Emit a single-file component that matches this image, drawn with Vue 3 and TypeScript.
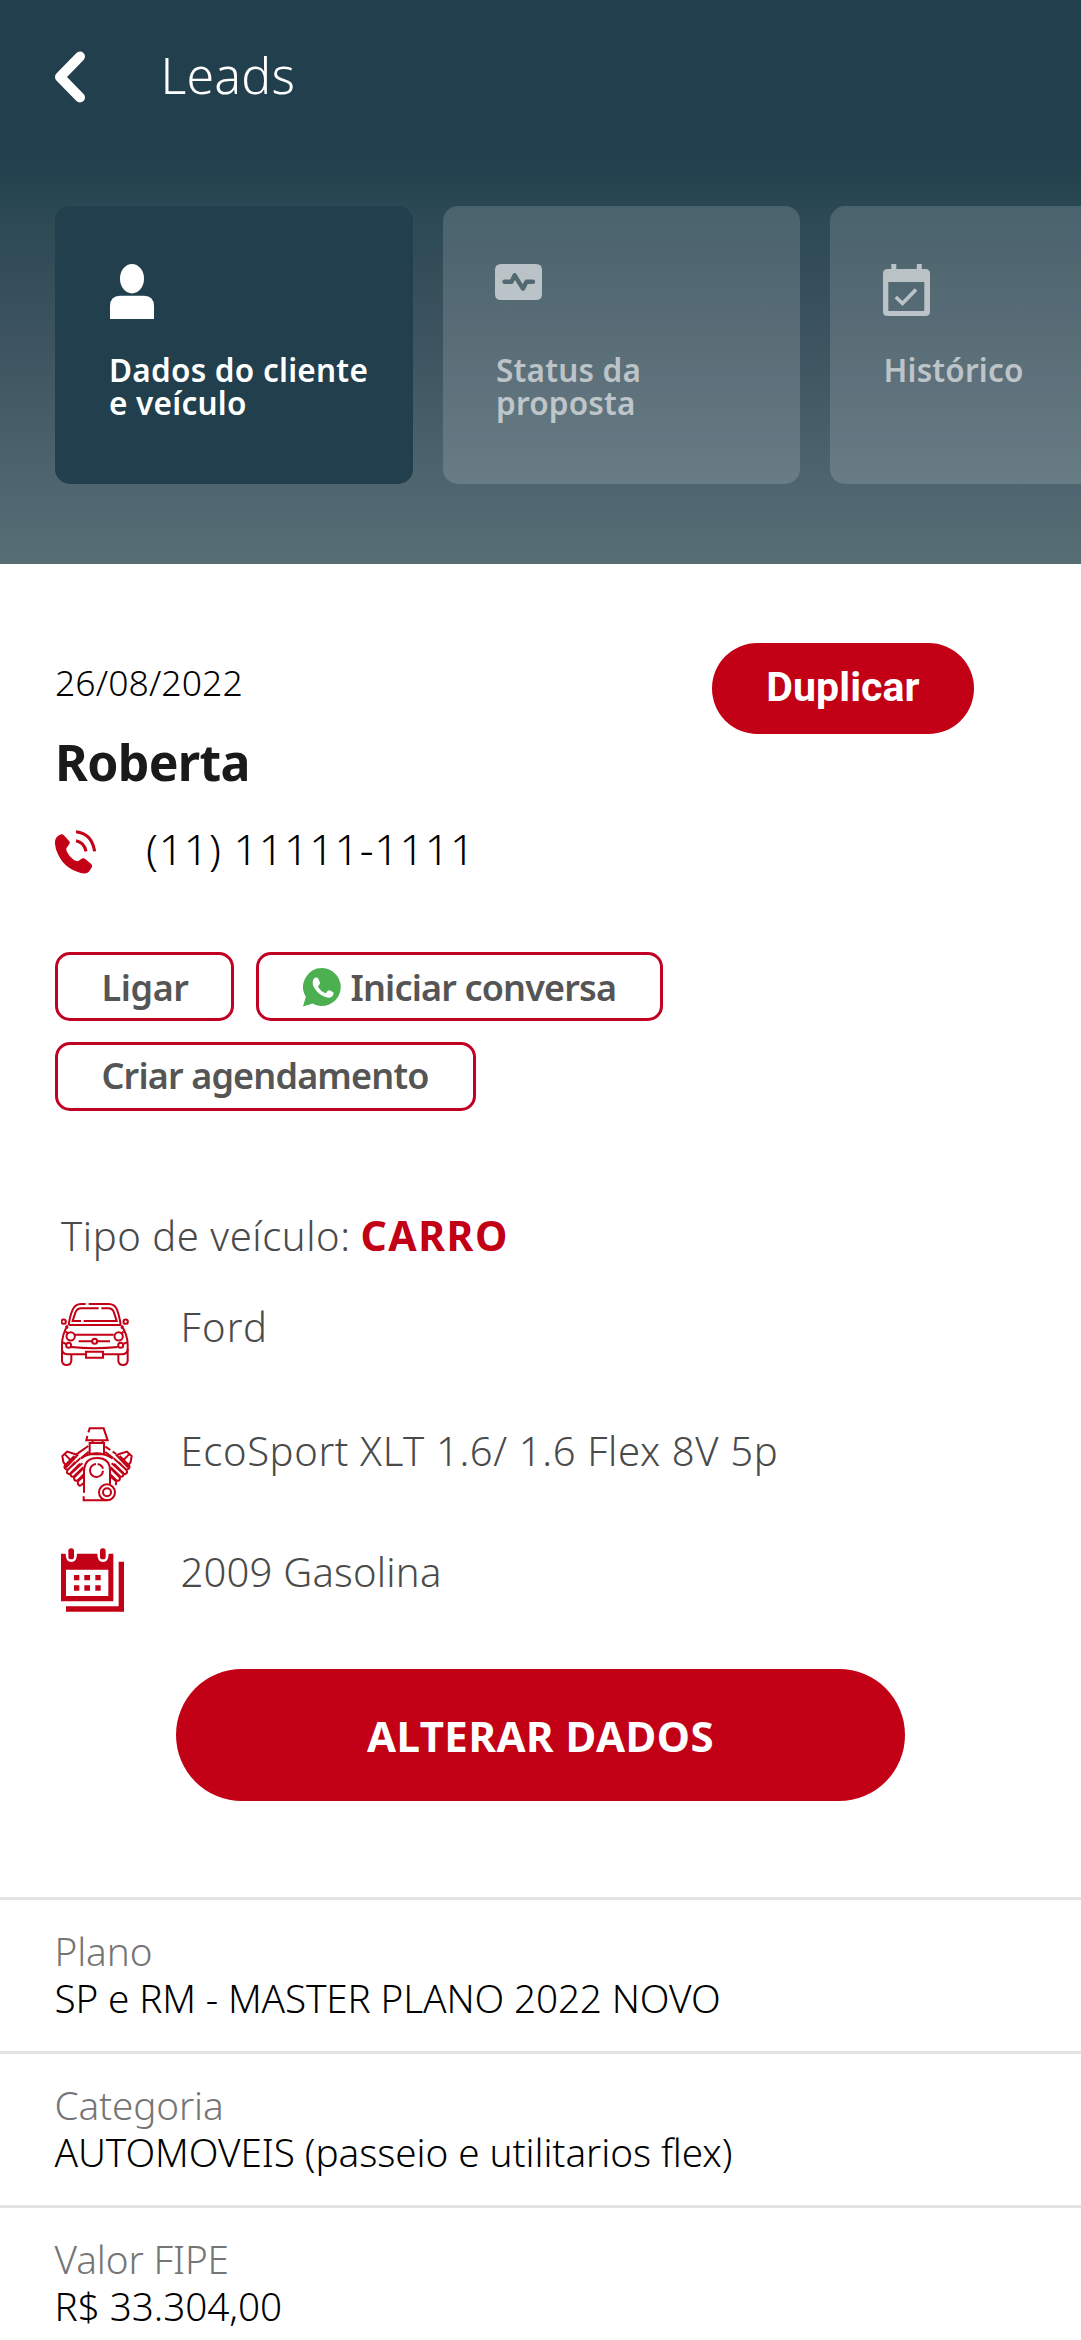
<script setup lang="ts">
interface Detail {
  label: string
  value: string
  labelSpacing: number
  valueSpacing: number
}

const details: Detail[] = [
  { label: 'Plano', value: 'SP e RM - MASTER PLANO 2022 NOVO', labelSpacing: -0.1, valueSpacing: -0.14 },
  { label: 'Categoria', value: 'AUTOMOVEIS (passeio e utilitarios flex)', labelSpacing: -0.15, valueSpacing: -0.08 },
  { label: 'Valor FIPE', value: 'R$ 33.304,00', labelSpacing: -0.1, valueSpacing: -0.05 },
]
</script>

<template>
  <div class="screen">
    <header class="header">
      <div class="bar">
        <svg class="back" width="30" height="52" viewBox="55 51 30 52">
          <path d="M80 56.5 60 77l20 20.5" fill="none" stroke="#fff" stroke-width="10" stroke-linecap="round" stroke-linejoin="round" />
        </svg>
        <h1 class="title">Leads</h1>
      </div>
      <nav class="tabs">
        <div class="tab active">
          <div class="tab-icon">
            <svg width="44" height="55" viewBox="110 264 44 55" fill="#fff">
              <ellipse cx="132" cy="278.7" rx="12" ry="14.7" />
              <path d="M110 319v-13q0-10 10-10.300h24q10 .3 10 10.300v13z" />
            </svg>
          </div>
          <div class="tab-text dados">Dados do cliente<br />e veículo</div>
        </div>
        <div class="tab">
          <div class="tab-icon dim">
            <svg width="47" height="36" viewBox="495 264 47 36">
              <path fill-rule="evenodd" fill="#fff" d="M501 264h35q6 0 6 6v24q0 6-6 6h-35q-6 0-6-6v-24q0-6 6-6z" mask="url(#pulse)" />
              <mask id="pulse" maskUnits="userSpaceOnUse" x="495" y="264" width="47" height="36">
                <rect x="495" y="264" width="47" height="36" fill="#fff" />
                <path d="M504.500 281.800h7l3.200-6.500 8.200 13.400 3.600-6.900h6.500" fill="none" stroke="#000" stroke-width="4.400" stroke-linecap="round" stroke-linejoin="round" />
              </mask>
            </svg>
          </div>
          <div class="tab-text status">Status da<br />proposta</div>
        </div>
        <div class="tab">
          <div class="tab-icon dim">
            <svg width="47" height="52" viewBox="882.700 264 47 52">
              <path fill="#fff" fill-rule="evenodd" d="M891 264h5v5h20.500v-5h5v5h3.500q4.700 0 4.700 4.500v38q0 4.500-4.700 4.500h-37.500q-4.800 0-4.800-4.500v-38q0-4.500 4.800-4.500h3.500zM888 282v29h36v-29z" />
              <path d="m895.500 297 6.700 6.500L915.700 289.500" fill="none" stroke="#fff" stroke-width="3.700" />
            </svg>
          </div>
          <div class="tab-text hist">Histórico</div>
        </div>
      </nav>
    </header>

    <main>
      <section class="client">
        <div>
          <div class="date">26/08/2022</div>
          <h2 class="name">Roberta</h2>
          <div class="phone">
            <svg width="41" height="43.400" viewBox="160 632 119 130" preserveAspectRatio="none" fill="none" stroke="#c20016" stroke-width="9">
              <path fill="#c20016" stroke="none" d="M173 647q8-5 14 2l14 16q4 5 0 10l-7 10q-3 5 1 13 6 14 19 23 10 7 15 3l8-6q6-3 11 1l17 15q5 5 1 11l-7 11q-5 6-14 6-20-1-43-16-22-15-34-43-9-20-8-37 1-12 13-19z" />
              <path d="M221 637q46 5 54 59M221 664q24 5 29 32" />
            </svg>
            <span>(11) 11111-1111</span>
          </div>
        </div>
        <button class="duplicate">Duplicar</button>
      </section>

      <section class="actions">
        <button class="outline call">Ligar</button>
        <button class="outline chat">
          <svg width="38" height="39" viewBox="0 0 38 39">
            <path fill="#4caf50" d="M19 0a19 19 0 1 1-9.500 35.600L0 38.600l2.800-9.800A19 19 0 0 1 19 0z" />
            <path fill="#fff" d="M11 10.500q1.200-1.500 3.400-.8.7.3 1.200 1.600l1.400 3.500q.3.900-1.700 3.100-.5.700 0 1.400 2.700 4.400 6.700 5.800.7.200 1.200-.4l1.600-2q.6-.8 1.500-.4l3.500 1.800q1 .5.8 1.500-.4 3.100-3.300 3.900-2.500.8-7.500-1.600-5.500-2.600-9-9-2.500-4.800.2-8.400z" />
          </svg>
          <span>Iniciar conversa</span>
        </button>
        <button class="outline schedule">Criar agendamento</button>
      </section>

      <section class="vehicle">
        <div class="kind">Tipo de veículo:<strong>CARRO</strong></div>
        <div class="row car">
          <div class="row-icon">
            <svg width="68" height="63" viewBox="64 41 204 189" fill="none" stroke="#c20016" stroke-width="6">
              <path d="M138 44h-14q-17 0-25 17-8 18-12 46M147 44h60q18 0 25 17 7 18 11 46M87 107h157M84 108q-17 27-17 59v14q2 14 17 14h54M245 108q19 27 19 59v14q-2 14-17 14h-57" />
              <path d="M177 57h-52q-13 0-18 13l-8 25h25M185 57h21q13 0 17 13l8 25h-99M106 136h116M117 156h40M172 156h39M78 126l8 8M252 126l-8 8M78 110l7 7M251 110l-7 7M68 159l12 5M262 159l-12 5M94 173q71 7 140 0" />
              <circle cx="93" cy="141" r="12.500" /><circle cx="237" cy="141" r="12.500" />
              <circle cx="165" cy="156" r="7.500" />
              <circle cx="87" cy="168" r="7.500" /><circle cx="243" cy="168" r="7.500" />
              <circle cx="72" cy="97" r="6.500" /><circle cx="258" cy="97" r="6.500" />
              <path d="M139 187h51v18h-51zM67 178v37q2 12 14 12t14-12v-18M264 178v37q-2 12-14 12t-14-12v-18" />
            </svg>
          </div>
          <span>Ford</span>
        </div>
        <div class="row engine">
          <div class="row-icon">
            <svg width="72" height="75" viewBox="61 50 216 225" fill="none" stroke="#c20016" stroke-width="6">
              <path d="M143 66l4-12h42l12 36h-64l3-13M156 91v7M186 91v7M147 98h43v34h-43z" />
              <path d="M143 107l-37 26M144 124l-23 20M194 109l15 10M216 124l11 7M194 125l24 19" />
              <path d="M130 247v-61q0-43 39-43t39 38v42M129 258v12h70" />
              <path d="M121 144q47-30 94 0" />
              <path d="M166 161a19.500 19.500 0 1 0 21 20" />
              <path d="M171 161q13 3 16 14" />
              <circle cx="199" cy="246" r="24" /><circle cx="199" cy="246" r="12" />
              <path d="M79 124l-14 13 3 18 10 14 32-34-8-4zM101 137l-28 28q-4 7 2 11t11-2l33-30M104 155l-24 25q-3 7 2 10t10-1l33-30M118 160l-28 28q-2 7 3 10t9-2l26-25M128 174l-27 27q-2 8 3 10t9-3l16-16M129 198l-17 15q-2 7 2 11t9-1l7-6" />
              <path d="M73 132l21 22M259 124l14 13-3 18-10 14-32-34 8-4zM237 137l28 28q4 7-2 11t-11-2l-33-30M233 155l25 25q3 7-2 10t-10-1l-33-30M220 160l28 28q2 7-3 10t-9-2l-26-25M210 174l27 27q2 8-3 10t-9-3l-16-16M209 198l17 15q2 7-2 11M265 132l-21 22" />
            </svg>
          </div>
          <span>EcoSport XLT 1.6/ 1.6 Flex 8V 5p</span>
        </div>
        <div class="row year">
          <div class="row-icon">
            <svg width="63" height="64" viewBox="62 413 189 192" fill="#c20016">
              <path fill-rule="evenodd" d="M62 430h14q0 25 17 25t17-25h61q0 25 17 25t17-25h14v143H62zM77 478v79h127v-79z" />
              <rect x="84" y="414" width="17" height="33" rx="8" /><rect x="179" y="414" width="17" height="33" rx="8" />
              <path d="M101 494h16v16h-16zM132 494h17v16h-17zM165 494h16v16h-16zM101 525h16v16h-16zM132 525h17v16h-17zM165 525h16v16h-16zM235 454h16v150H77v-16h158z" />
            </svg>
          </div>
          <span>2009 Gasolina</span>
        </div>
        <button class="edit">ALTERAR DADOS</button>
      </section>

      <dl class="details">
        <div v-for="d in details" :key="d.label" class="detail">
          <dt :style="{ letterSpacing: d.labelSpacing + 'px' }">{{ d.label }}</dt>
          <dd :style="{ letterSpacing: d.valueSpacing + 'px' }">{{ d.value }}</dd>
        </div>
      </dl>
    </main>
  </div>
</template>

<style>
body {
  margin: 0;
  background: #fff;
}
</style>

<style scoped>
.screen {
  width: 1081px;
  height: 2340px;
  overflow: hidden;
  background: #fff;
  font-family: "Noto Sans", sans-serif;
  font-weight: 300;
  color: #000;
  white-space: nowrap;
}
svg {
  display: block;
  flex: none;
}
h1,
h2,
dl,
dd {
  margin: 0;
}
button {
  box-sizing: border-box;
  font-family: inherit;
  padding: 0;
  border: 0;
}
.header {
  box-sizing: border-box;
  height: 563.5px;
  padding-top: 41px;
  overflow: hidden;
  background: linear-gradient(#213f4c 0, #213f4c 155px, #2a4853 205px, #3d5460 340px, #4e6570 480px, #586e75 563px);
}
.bar {
  display: flex;
  align-items: center;
  height: 68px;
  padding-left: 55px;
}
.back {
  margin-top: 4px;
}
.title {
  margin-left: 75.5px;
  font-size: 50px;
  line-height: 68px;
  font-weight: 300;
  letter-spacing: 0.23px;
  color: #fff;
}
.tabs {
  display: flex;
  gap: 30px;
  margin-top: 97px;
  padding-left: 55px;
}
.tab {
  flex: none;
  box-sizing: border-box;
  width: 357.5px;
  height: 278px;
  padding: 58px 0 0 52.5px;
  border-radius: 15px;
  background: rgba(255, 255, 255, 0.15);
  color: rgba(255, 255, 255, 0.6);
}
.tab.active {
  padding-left: 55px;
  background: #213f4c;
  color: #fff;
}
.tab-icon {
  height: 88.5px;
}
.dim {
  opacity: 0.6;
}
.tab-text {
  font-size: 31.5px;
  line-height: 33px;
  font-weight: 560;
}
.dados {
  margin-left: -1px;
  letter-spacing: 0.25px;
}
.status {
  margin-left: 1px;
  letter-spacing: 0.2px;
}
.hist {
  margin-left: 1px;
  letter-spacing: 0.2px;
}
.client {
  display: flex;
  justify-content: space-between;
  align-items: flex-start;
  padding: 79.5px 107px 0 55px;
}
.date {
  margin-top: 15px;
  font-size: 35.5px;
  line-height: 48px;
  letter-spacing: 0.1px;
}
.name {
  margin-top: 22px;
  font-size: 50px;
  line-height: 68px;
  font-weight: 700;
  letter-spacing: -0.66px;
  color: #1a1a1a;
}
.phone {
  display: flex;
  align-items: center;
  height: 59px;
  margin-top: 23px;
  font-size: 43px;
  line-height: 59px;
  letter-spacing: 0.68px;
}
.phone span {
  margin-left: 50px;
}
.phone svg {
  margin-top: 7px;
}
.duplicate {
  width: 262px;
  height: 91px;
  padding-bottom: 3px;
  border-radius: 46px;
  background: #c20016;
  font-family: Roboto, sans-serif;
  font-size: 41px;
  font-weight: 700;
  letter-spacing: 0.1px;
  color: #fff;
}
.actions {
  display: flex;
  flex-wrap: wrap;
  gap: 21.500px 22px;
  margin: 73.500px 300px 0 55px;
}
.outline {
  display: flex;
  align-items: center;
  height: 69px;
  padding-left: 42px;
  border: 3px solid #c20024;
  border-radius: 15px;
  background: #fff;
  font-size: 36px;
  line-height: 49px;
  font-weight: 640;
  color: #555;
}
.call {
  width: 178.5px;
  padding: 2px 0 0 43.5px;
  letter-spacing: -0.4px;
}
.chat {
  width: 407px;
  padding: 2px 0 0 44.5px;
  letter-spacing: -0.85px;
}
.chat span {
  margin-left: 9.5px;
}
.chat svg {
  margin-top: 0;
}
.schedule {
  width: 420.5px;
  padding: 0 0 2px 43.5px;
  letter-spacing: -0.85px;
}
.vehicle {
  display: flex;
  flex-direction: column;
  padding: 96.5px 0 0 61px;
  font-size: 40px;
  line-height: 55px;
  color: #4a4a4a;
}
.kind {
  height: 55px;
  letter-spacing: 0.55px;
}
.kind strong {
  margin-left: 10px;
  font-size: 41px;
  line-height: 54px;
  font-weight: 700;
  letter-spacing: 1.5px;
  color: #c20016;
}
.row {
  display: flex;
  align-items: flex-start;
}
.row-icon {
  flex: none;
  width: 119.5px;
  padding-top: 4px;
}
.car {
  height: 124px;
  margin-top: 36px;
  letter-spacing: 1.2px;
}
.engine {
  height: 121px;
  letter-spacing: 0.63px;
}
.year {
  height: 125px;
  letter-spacing: 0.2px;
}
.edit {
  width: 729px;
  height: 132px;
  padding-top: 1px;
  margin-left: 115px;
  border-radius: 66px;
  background: #c20016;
  font-size: 42px;
  font-weight: 700;
  letter-spacing: 0.5px;
  color: #fff;
}
.details {
  margin-top: 96.500px;
  font-size: 38.7px;
  line-height: 47px;
}
.detail {
  box-sizing: border-box;
  height: 154px;
  padding: 28px 0 0 54.5px;
  border-top: 3px solid #e3e3e3;
}
dt {
  color: #757575;
}
</style>
